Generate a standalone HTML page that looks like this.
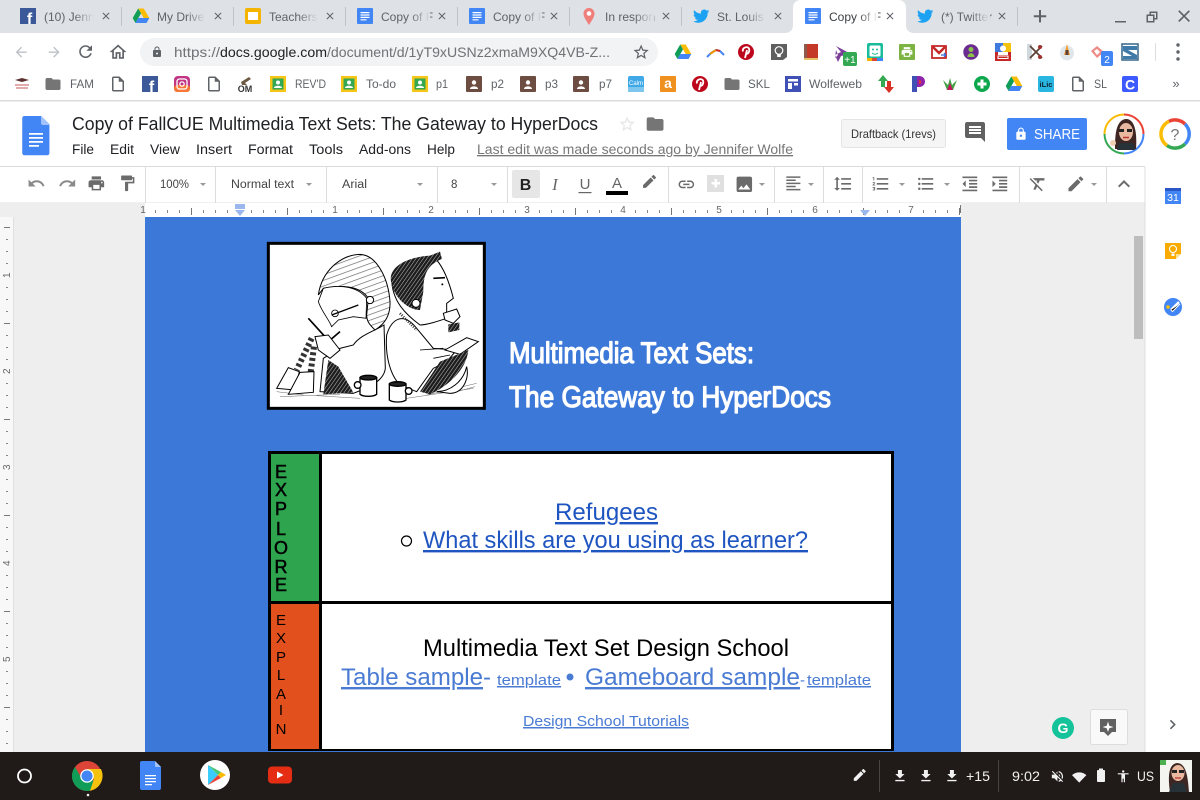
<!DOCTYPE html>
<html><head><meta charset="utf-8"><title>Copy of FallCUE Multimedia Text Sets</title>
<style>
html,body{margin:0;padding:0;width:1200px;height:800px;overflow:hidden;background:#fff}
svg{display:block}
text{font-family:"Liberation Sans",sans-serif}
.tab{font-size:12px;fill:#5f6368}
.bm{font-size:12px;fill:#5f6368}
.menu{font-size:13.5px;fill:#202124}
.tb{font-size:11.5px;fill:#444}
.rl{font-size:10px;fill:#666}
.shelf{font-size:14px;fill:#f1f1f1}
</style></head><body>
<svg width="1200" height="800" viewBox="0 0 1200 800" xmlns="http://www.w3.org/2000/svg">
<defs>
<linearGradient id="fd"><stop offset="0" stop-color="#dee1e6" stop-opacity="0"/><stop offset="1" stop-color="#dee1e6"/></linearGradient>
<linearGradient id="fw"><stop offset="0" stop-color="#fff" stop-opacity="0"/><stop offset="1" stop-color="#fff"/></linearGradient>
<pattern id="rt" x="143" y="0" width="96" height="20" patternUnits="userSpaceOnUse">
<rect x="12" y="7" width="1" height="3" fill="#888"/><rect x="24" y="7" width="1" height="3" fill="#888"/><rect x="36" y="7" width="1" height="3" fill="#888"/><rect x="48" y="5" width="1" height="7" fill="#777"/><rect x="60" y="7" width="1" height="3" fill="#888"/><rect x="72" y="7" width="1" height="3" fill="#888"/><rect x="84" y="7" width="1" height="3" fill="#888"/>
</pattern>
<pattern id="vt" x="0" y="179" width="14" height="96" patternUnits="userSpaceOnUse">
<rect x="6" y="12" width="2" height="1" fill="#888"/><rect x="6" y="24" width="2" height="1" fill="#888"/><rect x="6" y="36" width="2" height="1" fill="#888"/><rect x="4" y="48" width="6" height="1" fill="#777"/><rect x="6" y="60" width="2" height="1" fill="#888"/><rect x="6" y="72" width="2" height="1" fill="#888"/><rect x="6" y="84" width="2" height="1" fill="#888"/>
</pattern>
<pattern id="hatch" width="9" height="9" patternUnits="userSpaceOnUse" patternTransform="rotate(35)"><rect width="9" height="9" fill="#1c1c1c"/><rect width="1.600" height="9" fill="#bbb"/></pattern>
<pattern id="hatch2" width="16" height="16" patternUnits="userSpaceOnUse" patternTransform="rotate(70)"><rect width="16" height="16" fill="#fff"/><rect width="2" height="16" fill="#666"/></pattern>

<path id="close" d="M19 6.41L17.59 5 12 10.59 6.41 5 5 6.41 10.59 12 5 17.59 6.41 19 12 13.41 17.59 19 19 17.59 13.41 12z"/>
<path id="undo" d="M12.5 8c-2.65 0-5.05.99-6.9 2.6L2 7v9h9l-3.62-3.62c1.39-1.16 3.16-1.88 5.12-1.88 3.54 0 6.55 2.31 7.6 5.5l2.37-.78C21.08 11.03 17.15 8 12.5 8z"/>
<path id="redo" d="M18.4 10.6C16.55 8.99 14.15 8 11.5 8c-4.65 0-8.58 3.03-9.96 7.22L3.9 16c1.05-3.19 4.05-5.5 7.6-5.5 1.95 0 3.73.72 5.12 1.88L13 16h9V7l-3.6 3.6z"/>
<path id="print" d="M19 8H5c-1.66 0-3 1.34-3 3v6h4v4h12v-4h4v-6c0-1.66-1.34-3-3-3zm-3 11H8v-5h8v5zm3-7c-.55 0-1-.45-1-1s.45-1 1-1 1 .45 1 1-.45 1-1 1zm-1-9H6v4h12V3z"/>
<path id="paint" d="M18 4V3c0-.55-.45-1-1-1H5c-.55 0-1 .45-1 1v4c0 .55.45 1 1 1h12c.55 0 1-.45 1-1V6h1v4H9v11c0 .55.45 1 1 1h2c.55 0 1-.45 1-1v-9h8V4h-3z"/>
<path id="link" d="M3.9 12c0-1.71 1.39-3.1 3.1-3.1h4V7H7c-2.76 0-5 2.24-5 5s2.24 5 5 5h4v-1.9H7c-1.71 0-3.1-1.39-3.1-3.1zM8 13h8v-2H8v2zm9-6h-4v1.9h4c1.71 0 3.1 1.39 3.1 3.1s-1.39 3.1-3.1 3.1h-4V17h4c2.76 0 5-2.24 5-5s-2.24-5-5-5z"/>
<path id="image" d="M21 19V5c0-1.1-.9-2-2-2H5c-1.1 0-2 .9-2 2v14c0 1.1.9 2 2 2h14c1.1 0 2-.9 2-2zM8.5 13.5l2.5 3.01L14.5 12l4.5 6H5l3.5-4.5z"/>
<path id="align" d="M15 15H3v2h12v-2zm0-8H3v2h12V7zM3 13h18v-2H3v2zm0 8h18v-2H3v2zM3 3v2h18V3H3z"/>
<path id="lsp" d="M6 7h2.5L5 3.5 1.5 7H4v10H1.5L5 20.5 8.5 17H6V7zm4-2v2h12V5H10zm0 14h12v-2H10v2zm0-6h12v-2H10v2z"/>
<path id="numl" d="M2 17h2v.5H3v1h1v.5H2v1h3v-4H2v1zm1-9h1V4H2v1h1v3zm-1 3h1.8L2 13.1v.9h3v-1H3.2L5 10.9V10H2v1zm5-6v2h14V5H7zm0 14h14v-2H7v2zm0-6h14v-2H7v2z"/>
<path id="bull" d="M4 10.5c-.83 0-1.5.67-1.5 1.5s.67 1.5 1.5 1.5 1.5-.67 1.5-1.5-.67-1.5-1.5-1.5zm0-6c-.83 0-1.5.67-1.5 1.5S3.17 7.5 4 7.5 5.5 6.83 5.5 6 4.83 4.5 4 4.5zm0 12c-.83 0-1.5.68-1.5 1.5s.68 1.5 1.5 1.5 1.5-.68 1.5-1.5-.67-1.5-1.5-1.5zM7 19h14v-2H7v2zm0-6h14v-2H7v2zm0-8v2h14V5H7z"/>
<path id="indl" d="M11 17h10v-2H11v2zm-8-5l4 4V8l-4 4zm0 9h18v-2H3v2zM3 3v2h18V3H3zm8 6h10V7H11v2zm0 4h10v-2H11v2z"/>
<path id="indr" d="M3 21h18v-2H3v2zM3 8v8l4-4-4-4zm8 9h10v-2H11v2zM3 3v2h18V3H3zm8 6h10V7H11v2zm0 4h10v-2H11v2z"/>
<path id="clr" d="M3.27 5L2 6.27l6.97 6.97L6.5 19h3l1.57-3.66L16.73 21 18 19.73 3.55 5.27 3.27 5zM6 5v.18L8.82 8h2.4l-.72 1.68 2.1 2.1L14.21 8H20V5H6z"/>
<path id="edit" d="M3 17.25V21h3.75L17.81 9.94l-3.75-3.75L3 17.25zM20.71 7.04c.39-.39.39-1.02 0-1.41l-2.34-2.34c-.39-.39-1.02-.39-1.41 0l-1.83 1.83 3.75 3.75 1.83-1.83z"/>
<path id="mark" d="M17.75 7L14 3.25l-10 10V17h3.75l10-10zm2.96-2.96c.39-.39.39-1.02 0-1.41L18.37.29c-.39-.39-1.02-.39-1.41 0L15 2.25 18.75 6l1.96-1.96z"/>
<path id="cmt" d="M21.99 4c0-1.1-.89-2-1.99-2H4c-1.1 0-2 .9-2 2v12c0 1.1.9 2 2 2h14l4 4-.01-18zM18 14H6v-2h12v2zm0-3H6V9h12v2zm0-3H6V6h12v2z"/>
<path id="lock" d="M18 8h-1V6c0-2.76-2.24-5-5-5S7 3.24 7 6v2H6c-1.1 0-2 .9-2 2v10c0 1.1.9 2 2 2h12c1.1 0 2-.9 2-2V10c0-1.1-.9-2-2-2zm-6 9c-1.1 0-2-.9-2-2s.9-2 2-2 2 .9 2 2-.9 2-2 2zm3.1-9H8.9V6c0-1.71 1.39-3.1 3.1-3.1 1.71 0 3.1 1.39 3.1 3.1v2z"/>
<path id="star" d="M22 9.24l-7.19-.62L12 2 9.19 8.63 2 9.24l5.46 4.73L5.82 21 12 17.27 18.18 21l-1.63-7.03L22 9.24zM12 15.4l-3.76 2.27 1-4.28-3.32-2.88 4.38-.38L12 6.1l1.71 4.04 4.38.38-3.32 2.88 1 4.28L12 15.4z"/>
<path id="folder" d="M10 4H4c-1.1 0-1.99.9-1.99 2L2 18c0 1.1.9 2 2 2h16c1.1 0 2-.9 2-2V8c0-1.1-.9-2-2-2h-8l-2-2z"/>
<path id="file" d="M14 2H6c-1.1 0-1.99.9-1.99 2L4 20c0 1.1.89 2 1.99 2H18c1.1 0 2-.9 2-2V8l-6-6zm4 18H6V4h7v5h5v11z"/>
<path id="home" d="M12 5.69l5 4.5V18h-2v-6H9v6H7v-7.81l5-4.5M12 3L2 12h3v8h6v-6h2v6h6v-8h3L12 3z"/>
<path id="refresh" d="M17.65 6.35C16.2 4.9 14.21 4 12 4c-4.42 0-7.99 3.58-7.99 8s3.57 8 7.99 8c3.73 0 6.84-2.55 7.73-6h-2.08c-.82 2.33-3.04 4-5.65 4-3.31 0-6-2.69-6-6s2.69-6 6-6c1.66 0 3.14.69 4.22 1.78L13 11h7V4l-2.35 2.35z"/>
<path id="back" d="M20 11H7.83l5.59-5.59L12 4l-8 8 8 8 1.41-1.41L7.83 13H20v-2z"/>
<path id="fwd" d="M12 4l-1.41 1.41L16.17 11H4v2h12.17l-5.58 5.59L12 20l8-8z"/>
<path id="dl" d="M19 9h-4V3H9v6H5l7 7 7-7zM5 18v2h14v-2H5z"/>
<path id="wifi" d="M12 4C7.3 4 3.2 5.7 0 8.5L12 21 24 8.5C20.8 5.7 16.7 4 12 4z"/>
<path id="mute" d="M16.5 12c0-1.77-1.02-3.29-2.5-4.03v2.21l2.45 2.45c.03-.2.05-.41.05-.63zm2.5 0c0 .94-.2 1.82-.54 2.64l1.51 1.51C20.63 14.91 21 13.5 21 12c0-4.28-2.99-7.86-7-8.77v2.06c2.89.86 5 3.54 5 6.71zM4.27 3L3 4.27 7.73 9H3v6h4l5 5v-6.73l4.25 4.25c-.67.52-1.42.93-2.25 1.18v2.06c1.38-.31 2.63-.95 3.69-1.81L19.73 21 21 19.73l-9-9L4.27 3zM12 4L9.91 6.09 12 8.18V4z"/>
<path id="acc" d="M12 2c1.1 0 2 .9 2 2s-.9 2-2 2-2-.9-2-2 .9-2 2-2zm9 7h-6v13h-2v-6h-2v6H9V9H3V7h18v2z"/>
<path id="up" d="M12 8l-6 6 1.41 1.41L12 10.83l4.59 4.58L18 14z"/>
<path id="chev" d="M10 6L8.59 7.41 13.17 12l-4.58 4.59L10 18l6-6z"/>
<path id="bird" d="M23.953 4.57a10 10 0 01-2.825.775 4.958 4.958 0 002.163-2.723c-.951.555-2.005.959-3.127 1.184a4.92 4.92 0 00-8.384 4.482C7.69 8.095 4.067 6.13 1.64 3.162a4.822 4.822 0 00-.666 2.475c0 1.71.87 3.213 2.188 4.096a4.904 4.904 0 01-2.228-.616v.06a4.923 4.923 0 003.946 4.827 4.996 4.996 0 01-2.212.085 4.936 4.936 0 004.604 3.417 9.867 9.867 0 01-6.102 2.105c-.39 0-.779-.023-1.17-.067a13.995 13.995 0 007.557 2.209c9.053 0 13.998-7.496 13.998-13.985 0-.21 0-.42-.015-.63A9.935 9.935 0 0024 4.59z"/>
<g id="doc16"><rect x="-8" y="-8" width="16" height="16" rx="1" fill="#4285f4"/><path d="M-4.5-4h9v1.2h-9zM-4.5-1.6h9v1.2h-9zM-4.5.8h9V2h-9zM-4.5 3.2h6v1.2h-6z" fill="#fff"/></g>
<g id="fb"><rect x="-8" y="-8" width="16" height="16" fill="#3b5998"/><text x="1.5" y="8" font-size="16" font-weight="bold" fill="#fff" text-anchor="middle">f</text></g>
<g id="drive"><path d="M-2.8-7.5h5.6L8.3 2H2.7z" fill="#fbbc05"/><path d="M-2.8-7.5L-8.3 2l2.8 5L0-2.6z" fill="#0f9d58"/><path d="M-5.5 7h11l2.8-5H-2.7z" fill="#4285f4"/></g>
<g id="pin"><circle r="8" fill="#bd081c"/><path d="M-1 6L1-2M-3-.5C-4-4 0-5.500 2-4.500 4.500-3 3 2 .5 1.800" stroke="#fff" stroke-width="1.800" fill="none"/></g>
<g id="cl"><rect x="-8" y="-8" width="16" height="16" fill="#f5c518"/><rect x="-5.500" y="-5.500" width="11" height="11" fill="#35a852"/><circle cy="-1.500" r="2" fill="#fff"/><path d="M-4 4c0-3 8-3 8 0z" fill="#fff"/></g>
<g id="cb"><rect x="-8" y="-8" width="16" height="16" rx="1" fill="#6d4c41"/><circle cy="-1.500" r="2.200" fill="#fff"/><path d="M-4 5c0-3.500 8-3.500 8 0z" fill="#fff"/></g>
</defs>

<!-- Tab strip -->
<rect width="1200" height="33" fill="#dee1e6"/>
<rect x="0" y="33" width="1200" height="67" fill="#fff"/>
<path d="M785 33c5 0 8-3 8-8V8c0-5 3-8 8-8h97c5 0 8 3 8 8v17c0 5 3 8 8 8z" fill="#fff"/>
<g fill="#bfc2c7"><rect x="121" y="7" width="1" height="19"/><rect x="233" y="7" width="1" height="19"/><rect x="345" y="7" width="1" height="19"/><rect x="457" y="7" width="1" height="19"/><rect x="569" y="7" width="1" height="19"/><rect x="681" y="7" width="1" height="19"/><rect x="1017" y="7" width="1" height="19"/></g>

<use href="#fb" x="28" y="16"/>
<use href="#drive" x="141" y="16"/>
<g transform="translate(253 16)"><rect x="-8" y="-8" width="16" height="16" rx="2" fill="#f4b400"/><rect x="-5" y="-4" width="10" height="8" fill="#fff"/></g>
<use href="#doc16" x="365" y="16"/>
<use href="#doc16" x="477" y="16"/>
<g transform="translate(589 16)"><path d="M0 9C-3 4-5.500 1-5.500-2.500a5.500 5.500 0 0 1 11 0C5.500 1 3 4 0 9z" fill="#ef7f7a"/><circle cy="-2.500" r="2.300" fill="#fff"/></g>
<use href="#bird" transform="translate(693 8) scale(.68)" fill="#1da1f2"/>
<use href="#doc16" x="813" y="16"/>
<use href="#bird" transform="translate(917 8) scale(.68)" fill="#1da1f2"/>

<text class="tab" x="44" y="21">(10) Jenn</text><rect x="74" y="8" width="20" height="18" fill="url(#fd)"/>
<text class="tab" x="157" y="21">My Drive</text><rect x="186" y="8" width="20" height="18" fill="url(#fd)"/>
<text class="tab" x="269" y="21">Teachers</text><rect x="298" y="8" width="20" height="18" fill="url(#fd)"/>
<text class="tab" x="381" y="21">Copy of F</text><rect x="410" y="8" width="20" height="18" fill="url(#fd)"/>
<text class="tab" x="493" y="21">Copy of F</text><rect x="522" y="8" width="20" height="18" fill="url(#fd)"/>
<text class="tab" x="605" y="21">In respon</text><rect x="634" y="8" width="20" height="18" fill="url(#fd)"/>
<text class="tab" x="717" y="21">St. Louis</text><rect x="746" y="8" width="20" height="18" fill="url(#fd)"/>
<text class="tab" x="829" y="21" style="fill:#3c4043">Copy of F</text><rect x="858" y="8" width="20" height="18" fill="url(#fw)"/>
<text class="tab" x="941" y="21">(*) Twitter</text><rect x="970" y="8" width="20" height="18" fill="url(#fd)"/>

<g fill="#5f6368">
<use href="#close" transform="translate(100 10) scale(.5)"/><use href="#close" transform="translate(212 10) scale(.5)"/><use href="#close" transform="translate(324 10) scale(.5)"/><use href="#close" transform="translate(436 10) scale(.5)"/><use href="#close" transform="translate(548 10) scale(.5)"/><use href="#close" transform="translate(660 10) scale(.5)"/><use href="#close" transform="translate(772 10) scale(.5)"/><use href="#close" transform="translate(884 10) scale(.5)"/><use href="#close" transform="translate(996 10) scale(.5)"/>
<path d="M1039 10h2v5.200h5.200v2H1041v5.200h-2v-5.200h-5.200v-2h5.200z"/>
<rect x="1115" y="21" width="11" height="1.500"/>
<path transform="translate(-3.500 3.500)" d="M1150 11h3v-3h8v8h-3v3h-8zm1.500 1.500v5h5v-5zm3-3V11h3.500v3.500h1.500v-5z"/>
<use href="#close" transform="translate(1174 6) scale(.84)"/>
</g>

<!-- Address row -->
<use href="#back" transform="translate(13 44) scale(.68)" fill="#bdc1c6"/>
<use href="#fwd" transform="translate(46 44) scale(.68)" fill="#bdc1c6"/>
<use href="#refresh" transform="translate(76 42) scale(.8)" fill="#5f6368"/>
<use href="#home" transform="translate(108 42) scale(.84)" fill="#5f6368"/>
<rect x="140" y="38" width="518" height="28" rx="14" fill="#f1f3f4"/>
<use href="#lock" transform="translate(151 46) scale(.5)" fill="#5f6368"/>
<text x="174" y="57" font-size="14" fill="#6f7276" textLength="46" lengthAdjust="spacingAndGlyphs">https://</text>
<text x="220" y="57" font-size="14" fill="#202124" textLength="107" lengthAdjust="spacingAndGlyphs">docs.google.com</text>
<text x="327" y="57" font-size="14" fill="#6f7276" textLength="283" lengthAdjust="spacingAndGlyphs">/document/d/1yT9xUSNz2xmaM9XQ4VB-Z...</text>
<use href="#star" transform="translate(632 43) scale(.76)" fill="#5f6368"/>

<!-- Extensions -->
<g transform="translate(683 52)"><use href="#drive"/></g>
<path d="M707 57l4-4 5-3 4 1 4 4" fill="none" stroke="#4285f4" stroke-width="2"/><path d="M710 54l6-4" stroke="#f09300" stroke-width="2"/><path d="M716 50l4 1" stroke="#d93025" stroke-width="2"/>
<use href="#pin" x="746" y="52"/>
<g transform="translate(779 52)"><path d="M-8-8H8V5L4 8H-8z" fill="#5f5f5f"/><circle cy="-1.500" r="3.800" fill="none" stroke="#fff" stroke-width="1.200"/><path d="M-1.800 2.500h3.600V5h-3.600z" fill="#fff"/></g>
<g transform="translate(811 52)"><rect x="-7" y="-8" width="14" height="15" fill="#c53929"/><rect x="-7" y="-8" width="3" height="15" fill="#8d5b4c"/><rect x="-7" y="6" width="14" height="2" fill="#e8c468"/></g>
<path d="M836 46L851 54 841 56 838 62 835 55 841 52zM836 50l-1 8 3-3z" fill="#7b3f98"/>
<rect x="843" y="52" width="14" height="14" rx="2" fill="#34a853"/><text x="850" y="63" font-size="10" fill="#fff" text-anchor="middle">+1</text>
<g transform="translate(875 52)"><rect x="-8" y="-9" width="16" height="18" rx="2" fill="#1abc9c"/><rect x="-5.500" y="-6.500" width="11" height="11" rx="1.500" fill="#fff"/><circle cx="-2" cy="-2.500" r="1" fill="#1abc9c"/><circle cx="2" cy="-2.500" r="1" fill="#1abc9c"/><path d="M-3 1q3 2.500 6 0" stroke="#1abc9c" fill="none"/><rect x="-8" y="6" width="5" height="3" fill="#f4b400"/><rect x="-3" y="6" width="5" height="3" fill="#db4437"/><rect x="2" y="6" width="6" height="3" fill="#4285f4"/></g>
<g transform="translate(907 52)"><rect x="-8" y="-8" width="16" height="16" rx="1" fill="#7cb342"/><use href="#print" transform="translate(-6.500 -6.500) scale(.54)" fill="#fff"/></g>
<g transform="translate(939 52)"><rect x="-7" y="-6" width="14" height="12" fill="#fff" stroke="#c62828" stroke-width="1.800"/><path d="M-6-5L0 1 6-5" fill="none" stroke="#c62828" stroke-width="2.500"/><path d="M2 3h5M7 3L5 1M7 3L5 5" stroke="#3367d6" stroke-width="1.200" fill="none"/></g>
<g transform="translate(971 52)"><circle r="7.700" fill="#6a2c91"/><circle cy="-2.500" r="2.500" fill="#8bc34a"/><path d="M-3.500 5c0-5 7-5 7 0z" fill="#8bc34a"/></g>
<g transform="translate(1003 52)"><rect x="-8" y="-9" width="8" height="9" fill="#3f7bdc"/><rect y="-9" width="8" height="9" fill="#f4c20d"/><rect x="-8" width="16" height="9" fill="#c62828"/><circle cy="-3.500" r="3" fill="#fff"/><rect x="-5" width="10" height="3" fill="#fff"/><rect x="-5" y="4" width="10" height="2.500" fill="none" stroke="#fff"/></g>
<g transform="translate(1035 52)"><rect x="-8" y="-8" width="5" height="16" fill="#cfd8dc"/><path d="M-5-6L7 6M-5 6L7-6" stroke="#5d4037" stroke-width="1.800"/><circle cx="5" cy="-5" r="2" fill="#a03030"/><circle cx="5" cy="5" r="2" fill="#a03030"/></g>
<g transform="translate(1067 52)"><ellipse cy="1" rx="7" ry="7.500" fill="#dfe6ec"/><path d="M0-8L3 3H-3z" fill="#f0a030"/><rect x="-1.500" y="-2" width="3" height="5" fill="#5d4037"/></g>
<g transform="translate(1098 52)"><path d="M-7-1L-1-6 6 0-1 6z" fill="#ee8a85"/><path d="M-4-1L-1-3 2 0-1 3z" fill="#fff"/></g>
<rect x="1101" y="51" width="12" height="15" rx="2" fill="#4285f4"/><text x="1107" y="63" font-size="10" fill="#fff" text-anchor="middle">2</text>
<g transform="translate(1130 52)"><rect x="-8" y="-8" width="16" height="16" fill="#fff" stroke="#33658a" stroke-width="1.500"/><path d="M-7-6H7V-2L-2-2 7 3V7H-7V4H2L-7-1z" fill="#3f7aa8"/></g>
<rect x="1155" y="43" width="1" height="18" fill="#ddd"/>
<g fill="#5f6368"><circle cx="1178" cy="45" r="1.700"/><circle cx="1178" cy="52" r="1.700"/><circle cx="1178" cy="59" r="1.700"/></g>

<!-- Bookmarks -->
<g transform="translate(22 84)"><rect x="-7" y="-7" width="14" height="14" fill="#fff"/><path d="M-7-4L0-6 7-4 0-2z" fill="#5d3030"/><path d="M-7 1h14M-6 4h12" stroke="#d89090" stroke-width="1.600"/></g>
<use href="#folder" transform="translate(44 75) scale(.75)" fill="#757575"/>
<text class="bm" x="70" y="88" textLength="24" lengthAdjust="spacingAndGlyphs">FAM</text>
<use href="#file" transform="translate(109 75) scale(.75)" fill="#5f6368"/>
<use href="#fb" x="150" y="84"/>
<g transform="translate(182 84)"><rect x="-8" y="-8" width="16" height="16" rx="4" fill="#c13584"/><rect x="-8" y="1" width="16" height="7" rx="3" fill="#f77737"/><rect x="-5" y="-5" width="10" height="10" rx="2.500" fill="none" stroke="#fff" stroke-width="1.300"/><circle r="2.200" fill="none" stroke="#fff" stroke-width="1.200"/></g>
<use href="#file" transform="translate(205 75) scale(.75)" fill="#5f6368"/>
<g transform="translate(245 84)"><path d="M-4-2L4-7 6-5 0-1 2 1-3 1z" fill="#6d5a45"/><text y="8" font-size="9" font-weight="bold" fill="#333" text-anchor="middle">OM</text></g>
<use href="#cl" x="278" y="84"/><text class="bm" x="295" y="88" textLength="31" lengthAdjust="spacingAndGlyphs">REV'D</text>
<use href="#cl" x="349" y="84"/><text class="bm" x="366" y="88" textLength="30" lengthAdjust="spacingAndGlyphs">To-do</text>
<use href="#cl" x="420" y="84"/><text class="bm" x="436" y="88" textLength="12" lengthAdjust="spacingAndGlyphs">p1</text>
<use href="#cb" x="474" y="84"/><text class="bm" x="491" y="88" textLength="13" lengthAdjust="spacingAndGlyphs">p2</text>
<use href="#cb" x="528" y="84"/><text class="bm" x="545" y="88" textLength="13" lengthAdjust="spacingAndGlyphs">p3</text>
<use href="#cb" x="581" y="84"/><text class="bm" x="599" y="88" textLength="13" lengthAdjust="spacingAndGlyphs">p7</text>
<g transform="translate(636 84)"><rect x="-8" y="-8" width="16" height="16" rx="2" fill="#3fa9e8"/><text y="1" font-size="6" fill="#fff" text-anchor="middle">Calm</text><rect x="-8" y="3" width="16" height="5" fill="#7fc6ef"/></g>
<g transform="translate(668 84)"><rect x="-8" y="-8" width="16" height="16" rx="1" fill="#f09020"/><text y="4" font-size="14" font-weight="bold" fill="#fff" text-anchor="middle">a</text></g>
<use href="#pin" x="700" y="84"/>
<use href="#folder" transform="translate(723 75) scale(.75)" fill="#757575"/>
<text class="bm" x="748" y="88" textLength="22" lengthAdjust="spacingAndGlyphs">SKL</text>
<g transform="translate(793 84)"><rect x="-8" y="-8" width="16" height="16" fill="#3f51b5"/><path d="M-5-5H5v2.500H-5zM-5-1h4v6h-4zM1-1h4v2.500H1z" fill="#fff"/></g>
<text class="bm" x="809" y="88" textLength="53" lengthAdjust="spacingAndGlyphs">Wolfeweb</text>
<g transform="translate(886 84)"><path d="M-3-9L2-3H-1V3H-5V-3H-8z" fill="#34a853"/><path d="M3 9L8 3H5V-3H1V3H-2z" fill="#d93025"/></g>
<g transform="translate(918 84)"><path d="M-6-8H1C9-8 9 3 1 3H-1V8H-6z" fill="#8e24aa"/><path d="M-6-8H-1V8H-6z" fill="#3f51b5"/><path d="M1-4C4-4 4 0 1 0z" fill="#e53935"/></g>
<g transform="translate(950 84)"><path d="M-7-4L-2 1 0-6 2 1 7-4 3 6H-3z" fill="#43a047"/><path d="M-3 6L0-1 3 6z" fill="#c2185b"/></g>
<g transform="translate(982 84)"><circle r="8" fill="#0da84d"/><path d="M-1.500-4.500h3v3h3v3h-3v3h-3v-3h-3v-3h3z" fill="#fff"/></g>
<use href="#drive" x="1014" y="84"/>
<g transform="translate(1046 84)"><rect x="-8" y="-8" width="16" height="16" rx="2" fill="#29b6e0"/><text y="3" font-size="7.500" font-weight="bold" fill="#123" text-anchor="middle">iLic</text></g>
<use href="#file" transform="translate(1069 75) scale(.75)" fill="#5f6368"/>
<text class="bm" x="1094" y="88" textLength="13" lengthAdjust="spacingAndGlyphs">SL</text>
<g transform="translate(1130 84)"><rect x="-8" y="-8" width="16" height="16" rx="2" fill="#3d5afe"/><text y="5.500" font-size="14" font-weight="bold" fill="#fff" text-anchor="middle">C</text></g>
<text x="1176" y="88" font-size="13" fill="#5f6368" text-anchor="middle">»</text>

<rect x="0" y="100" width="1200" height="1.500" fill="#dcdcdc"/>

<!-- Docs header -->
<g transform="translate(23 116)"><path d="M2 0H24L35 11V49a3 3 0 0 1-3 3H2a3 3 0 0 1-3-3V3A3 3 0 0 1 2 0z" transform="scale(.755)" fill="#4285f4"/><path d="M18 0l9 9h-7a2 2 0 0 1-2-2z" fill="#a1c2fa"/><path d="M6 17h14v1.700H6zM6 21h14v1.700H6zM6 25h14v1.700H6zM6 29h10v1.700H6z" fill="#fff"/></g>
<text x="72" y="130" font-size="18" fill="#202124" textLength="526" lengthAdjust="spacingAndGlyphs">Copy of FallCUE Multimedia Text Sets: The Gateway to HyperDocs</text>
<text class="menu" x="72" y="154" textLength="22" lengthAdjust="spacingAndGlyphs">File</text>
<text class="menu" x="110" y="154" textLength="24" lengthAdjust="spacingAndGlyphs">Edit</text>
<text class="menu" x="150" y="154" textLength="30" lengthAdjust="spacingAndGlyphs">View</text>
<text class="menu" x="196" y="154" textLength="36" lengthAdjust="spacingAndGlyphs">Insert</text>
<text class="menu" x="248" y="154" textLength="45" lengthAdjust="spacingAndGlyphs">Format</text>
<text class="menu" x="309" y="154" textLength="34" lengthAdjust="spacingAndGlyphs">Tools</text>
<text class="menu" x="359" y="154" textLength="52" lengthAdjust="spacingAndGlyphs">Add-ons</text>
<text class="menu" x="427" y="154" textLength="28" lengthAdjust="spacingAndGlyphs">Help</text>
<text x="477" y="154" font-size="13.500" fill="#777" text-decoration="underline" textLength="316" lengthAdjust="spacingAndGlyphs">Last edit was made seconds ago by Jennifer Wolfe</text>
<use href="#star" transform="translate(618 115) scale(.76)" fill="#e6e6e6"/>
<use href="#folder" transform="translate(645 114) scale(.84)" fill="#757575"/>
<rect x="841.500" y="119.500" width="104" height="28" rx="2" fill="#f5f5f5" stroke="#e4e4e4"/>
<text x="851" y="138" font-size="12" fill="#333" textLength="85" lengthAdjust="spacingAndGlyphs">Draftback (1revs)</text>
<use href="#cmt" transform="translate(963 120) scale(1)" fill="#616161"/>
<rect x="1007" y="118" width="80" height="32" rx="2" fill="#4285f4"/>
<use href="#lock" transform="translate(1014 127) scale(.58)" fill="#fff"/>
<text x="1034" y="139" font-size="15" fill="#fff" textLength="46" lengthAdjust="spacingAndGlyphs">SHARE</text>
<!-- avatar -->
<g transform="translate(1124 134)">
<path d="M0-19.500A19.500 19.500 0 0 1 19.500 0" fill="none" stroke="#ea4335" stroke-width="2"/><path d="M19.500 0A19.500 19.500 0 0 1 0 19.500" fill="none" stroke="#4285f4" stroke-width="2"/><path d="M0 19.500A19.500 19.500 0 0 1-19.500 0" fill="none" stroke="#34a853" stroke-width="2"/><path d="M-19.500 0A19.500 19.500 0 0 1 0-19.500" fill="none" stroke="#fbbc05" stroke-width="2"/>
<circle r="17" fill="#fff"/>
<path d="M-9 15C-9 4-9-14 2-15 12-15 13 2 12 15z" fill="#3e2723"/>
<ellipse cx="2" cy="-2" rx="7" ry="9" fill="#e8b8a0"/>
<path d="M-5-5h5v3h-5zM3-5h5v3H3z" fill="#222"/>
<path d="M-1 3.500h6" stroke="#b33" stroke-width="1.500"/>
<path d="M-7 16L-5 9H9L11 16z" fill="#263238"/>
<circle cx="-11" cy="9" r="3" fill="#f0d0b0"/>
</g>
<g transform="translate(1175 134)" fill="none" stroke-width="3.500">
<path d="M-6-12.700A14 14 0 0 1 10-10" stroke="#ea4335"/>
<path d="M10-10A14 14 0 0 1 10 10" stroke="#4285f4"/>
<path d="M10 10A14 14 0 0 1-8 11.500" stroke="#34a853"/>
<path d="M-8 11.500A14 14 0 0 1-6-12.700" stroke="#fbbc05"/>
<text y="6" font-size="16" fill="#757575" stroke="none" text-anchor="middle">?</text>
</g>

<!-- Toolbar -->
<rect x="0" y="166" width="1145" height="1" fill="#dadada"/>
<rect x="0" y="167" width="1145" height="36" fill="#fff"/>
<rect x="0" y="202.500" width="1145" height="1" fill="#e0e0e0"/>
<g fill="#dcdcdc"><rect x="145" y="167" width="1" height="36"/><rect x="215" y="167" width="1" height="36"/><rect x="326" y="167" width="1" height="36"/><rect x="437" y="167" width="1" height="36"/><rect x="507" y="167" width="1" height="36"/><rect x="668" y="167" width="1" height="36"/><rect x="774" y="167" width="1" height="36"/><rect x="823" y="167" width="1" height="36"/><rect x="862" y="167" width="1" height="36"/><rect x="1019" y="167" width="1" height="36"/><rect x="1106" y="167" width="1" height="36"/></g>
<g fill="#6b6b6b">
<use href="#undo" transform="translate(27 174) scale(.78)" fill="#8a8a8a"/>
<use href="#redo" transform="translate(58 174) scale(.78)" fill="#8a8a8a"/>
<use href="#print" transform="translate(87 174) scale(.78)"/>
<use href="#paint" transform="translate(118 174) scale(.78)"/>
<use href="#mark" transform="translate(640 175) scale(.76)"/>
<use href="#link" transform="translate(677 175) scale(.78)"/>
<use href="#image" transform="translate(734 174) scale(.86)"/>
<use href="#align" transform="translate(784 174) scale(.78)"/>
<use href="#lsp" transform="translate(833 174) scale(.82)"/>
<use href="#numl" transform="translate(871 174) scale(.82)"/>
<use href="#bull" transform="translate(916 174) scale(.82)"/>
<use href="#indl" transform="translate(960 174) scale(.82)"/>
<use href="#indr" transform="translate(990 174) scale(.82)"/>
<use href="#clr" transform="translate(1028 174) scale(.82)"/>
<use href="#edit" transform="translate(1066 174) scale(.82)"/>
<use href="#up" transform="translate(1112 172) scale(1)"/>
</g>
<g transform="translate(716 184)"><rect x="-9" y="-9" width="17" height="17" fill="#e0e0e0"/><path d="M-1.500-5h2.500v3h3v2.500H1v3h-2.500v-3h-3v-2.500h3z" fill="#fff"/></g>
<g fill="#999"><path d="M200 183h6l-3 3zM306 183h6l-3 3zM417 183h6l-3 3zM491 183h6l-3 3zM759 183h6l-3 3zM808 183h6l-3 3zM899 183h6l-3 3zM944 183h6l-3 3zM1091 183h6l-3 3z"/></g>
<text class="tb" x="160" y="188" textLength="29" lengthAdjust="spacingAndGlyphs">100%</text>
<text class="tb" x="231" y="188" textLength="63" lengthAdjust="spacingAndGlyphs">Normal text</text>
<text class="tb" x="342" y="188" textLength="25" lengthAdjust="spacingAndGlyphs">Arial</text>
<text class="tb" x="451" y="188">8</text>
<rect x="512" y="170" width="28" height="28" rx="2" fill="#e6e6e6"/>
<text x="525.500" y="190" font-size="16" font-weight="bold" fill="#222" text-anchor="middle">B</text>
<text x="555" y="190" font-size="17" fill="#666" text-anchor="middle" style="font-family:'Liberation Serif',serif;font-style:italic">I</text>
<text x="585" y="189" font-size="15" fill="#666" text-anchor="middle">U</text><rect x="578.500" y="192" width="13" height="1.200" fill="#666"/>
<text x="617" y="188" font-size="15" fill="#666" text-anchor="middle">A</text><rect x="606" y="191" width="22" height="4" fill="#000"/>

<!-- Canvas -->
<rect x="0" y="203" width="1145" height="549" fill="#eeeeee"/>
<rect x="145" y="203" width="816" height="14" fill="#fff"/>
<g transform="translate(0 203)"><rect x="145" y="0" width="816" height="14" fill="url(#rt)"/></g>
<text class="rl" x="143" y="213" text-anchor="middle">1</text><text class="rl" x="335" y="213" text-anchor="middle">1</text><text class="rl" x="431" y="213" text-anchor="middle">2</text><text class="rl" x="527" y="213" text-anchor="middle">3</text><text class="rl" x="623" y="213" text-anchor="middle">4</text><text class="rl" x="719" y="213" text-anchor="middle">5</text><text class="rl" x="815" y="213" text-anchor="middle">6</text><text class="rl" x="911" y="213" text-anchor="middle">7</text>
<rect x="960" y="205" width="1" height="8" fill="#777"/>
<path d="M235 204h10v5h-10z" fill="#9ab8ee"/><path d="M235 210h10l-5 6z" fill="#9ab8ee"/>
<path d="M860 210h10l-5 6z" fill="#9ab8ee"/>
<rect x="0" y="217" width="13" height="535" fill="#f8f8f8"/><rect x="13" y="217" width="1" height="535" fill="#e0e0e0"/>
<rect x="0" y="217" width="14" height="535" fill="url(#vt)"/>
<g font-size="10" fill="#666"><text transform="translate(10 278) rotate(-90)">1</text><text transform="translate(10 374) rotate(-90)">2</text><text transform="translate(10 470) rotate(-90)">3</text><text transform="translate(10 566) rotate(-90)">4</text><text transform="translate(10 662) rotate(-90)">5</text></g>
<rect x="1134" y="236" width="9" height="103" fill="#bdbdbd"/>

<!-- Page -->
<rect x="145" y="217" width="816" height="535" fill="#3c78d8"/>

<!-- Illustration -->
<g transform="translate(260 235) scale(.33333)">
<rect x="25" y="25" width="648" height="495" fill="#fff" stroke="#000" stroke-width="9"/>
<g stroke="#666" stroke-width="1.500" fill="none"><path d="M50 470L130 480M60 485L240 478M170 482L300 490M440 490L640 460M500 480L650 445M590 470L645 455"/></g>
<path d="M380 300C395 250 430 230 470 280L520 340 590 345 560 380 520 400 470 470 420 450C390 420 375 360 380 300Z" fill="#fff" stroke="#000" stroke-width="3"/>
<path d="M395 130C400 80 470 60 530 75 560 110 575 170 580 190L560 205 560 250C530 260 500 270 480 270 440 240 395 200 395 130Z" fill="#fff" stroke="#000" stroke-width="3"/>
<path d="M392 130C395 85 460 65 510 62L540 50 546 72C500 90 490 120 490 170L480 225C440 225 395 180 392 130Z" fill="url(#hatch)"/>
<circle cx="468" cy="205" r="12" fill="#fff" stroke="#000" stroke-width="3"/>
<path d="M520 130L555 128" stroke="#000" stroke-width="5"/><circle cx="547" cy="148" r="3" fill="#000"/>
<path d="M550 235L590 222 600 245 580 265 555 255Z" fill="#fff" stroke="#000" stroke-width="3"/>
<path d="M565 268L598 262 598 285 565 292Z" fill="url(#hatch)"/>
<path d="M420 235L470 285" stroke="#333" stroke-width="8" stroke-dasharray="3 4"/>
<path d="M555 345L620 308 655 320 600 358Z" fill="#fff" stroke="#000" stroke-width="3"/>
<path d="M480 470L540 380 625 345C620 400 570 450 510 478Z" fill="url(#hatch)"/>
<path d="M530 470C570 470 610 440 620 395 628 430 610 475 570 475Z" fill="#fff" stroke="#000" stroke-width="3"/>
<path d="M480 345L550 340M520 370L570 360" stroke="#000" stroke-width="2.500" fill="none"/>
<path d="M372 270C340 290 300 300 280 330L240 340 190 370 180 470 280 475C320 460 372 440 376 400Z" fill="#fff" stroke="#000" stroke-width="3"/>
<path d="M205 375L235 395 280 472 190 478Z" fill="url(#hatch)"/>
<path d="M175 180C185 110 240 60 300 58 350 60 385 130 390 200 392 245 370 270 345 285 330 270 320 260 320 240L325 190C300 150 240 150 190 160Z" fill="url(#hatch2)" stroke="#000" stroke-width="3"/>
<path d="M190 160C230 150 290 150 320 190L318 250 280 245 235 255 215 275C205 250 185 230 175 200Z" fill="#fff" stroke="#000" stroke-width="2.500"/>
<circle cx="330" cy="195" r="11" fill="#fff" stroke="#000" stroke-width="3"/>
<path d="M215 240L295 210" stroke="#000" stroke-width="4"/><circle cx="225" cy="235" r="10" fill="none" stroke="#000" stroke-width="2.500"/>
<path d="M145 250L195 305M240 290L205 320" stroke="#000" stroke-width="5" fill="none"/>
<path d="M165 305L205 300 240 345 210 370 175 345Z" fill="#fff" stroke="#000" stroke-width="3"/>
<path d="M155 310L110 405" stroke="#333" stroke-width="18" stroke-dasharray="9 8"/><path d="M162 335L152 412" stroke="#333" stroke-width="18" stroke-dasharray="9 8"/>
<path d="M50 460L85 398 118 410 105 465Z" fill="#fff" stroke="#000" stroke-width="3"/>
<path d="M85 478L120 412 162 410 160 472Z" fill="#fff" stroke="#000" stroke-width="3"/>
<g fill="#fff" stroke="#000" stroke-width="4"><path d="M300 428H350V478C340 486 310 486 300 478Z"/><circle cx="293" cy="450" r="10"/><ellipse cx="325" cy="428" rx="25" ry="7" fill="#222"/><path d="M388 447H438V495C428 503 398 503 388 495Z"/><circle cx="446" cy="468" r="10"/><ellipse cx="413" cy="447" rx="25" ry="7" fill="#222"/></g>
</g>

<!-- Headings -->
<text x="509" y="363" font-size="30" fill="#fff" stroke="#fff" stroke-width="1.300" stroke-linejoin="round" textLength="245" lengthAdjust="spacingAndGlyphs">Multimedia Text Sets:</text>
<text x="509" y="407" font-size="30" fill="#fff" stroke="#fff" stroke-width="1.300" stroke-linejoin="round" textLength="322" lengthAdjust="spacingAndGlyphs">The Gateway to HyperDocs</text>

<!-- Table -->
<rect x="268" y="451" width="626" height="300" fill="#000"/>
<rect x="271" y="454" width="48" height="147" fill="#2ea44f"/>
<rect x="271" y="604" width="48" height="145" fill="#e2501d"/>
<rect x="322" y="454" width="569" height="147" fill="#fff"/>
<rect x="322" y="604" width="569" height="145" fill="#fff"/>
<g font-size="18" fill="#000" stroke="#000" stroke-width=".5" text-anchor="middle">
<text x="281" y="478">E</text><text x="281" y="496">X</text><text x="281" y="515">P</text><text x="281" y="535">L</text><text x="281" y="554">O</text><text x="281" y="573">R</text><text x="281" y="591">E</text></g>
<g font-size="15" fill="#000" text-anchor="middle">
<text x="281" y="625">E</text><text x="281" y="643">X</text><text x="281" y="662">P</text><text x="281" y="680">L</text><text x="281" y="699">A</text><text x="281" y="715">I</text><text x="281" y="734">N</text></g>

<text x="555" y="520" font-size="24" fill="#1f55c0" text-decoration="underline" textLength="103" lengthAdjust="spacingAndGlyphs">Refugees</text>
<circle cx="406.500" cy="541" r="5" fill="none" stroke="#000" stroke-width="1.200"/>
<text x="423" y="548" font-size="24" fill="#1f55c0" text-decoration="underline" textLength="385" lengthAdjust="spacingAndGlyphs">What skills are you using as learner?</text>
<text x="423" y="656" font-size="24" fill="#000" textLength="366" lengthAdjust="spacingAndGlyphs">Multimedia Text Set Design School</text>
<text x="341" y="685" font-size="24" fill="#4a7bd3" text-decoration="underline" textLength="142" lengthAdjust="spacingAndGlyphs">Table sample</text>
<text x="483" y="685" font-size="24" fill="#4a7bd3">-</text>
<text x="497" y="685" font-size="15" fill="#4a7bd3" text-decoration="underline" textLength="64" lengthAdjust="spacingAndGlyphs">template</text>
<circle cx="570" cy="677" r="3.500" fill="#4a7bd3"/>
<text x="585" y="685" font-size="24" fill="#4a7bd3" text-decoration="underline" textLength="215" lengthAdjust="spacingAndGlyphs">Gameboard sample</text>
<text x="800" y="685" font-size="15" fill="#4a7bd3">-</text>
<text x="807" y="685" font-size="15" fill="#4a7bd3" text-decoration="underline" textLength="64" lengthAdjust="spacingAndGlyphs">template</text>
<text x="523" y="726" font-size="15" fill="#4a7bd3" text-decoration="underline" textLength="166" lengthAdjust="spacingAndGlyphs">Design School Tutorials</text>

<!-- Grammarly + explore -->
<circle cx="1063" cy="728" r="11" fill="#15c39a"/><text x="1063" y="733" font-size="14" font-weight="bold" fill="#fff" text-anchor="middle">G</text>
<rect x="1090.500" y="709.500" width="37" height="35" rx="2" fill="#f9f9f9" stroke="#ddd"/>
<g transform="translate(1108 727)"><path d="M-8-8H8V5H4L0 9-4 5H-8z" fill="#616161"/><path d="M0-5.500L1.300-1.300 5.500 0 1.300 1.300 0 5 -1.300 1.300-5.500 0-1.300-1.300z" fill="#fff"/></g>

<!-- Side panel -->
<rect x="1145" y="167" width="55" height="585" fill="#fff"/>
<rect x="1144.500" y="167" width="1" height="585" fill="#dfdfdf"/>
<g transform="translate(1173 196)"><rect x="-8" y="-8" width="16" height="16" fill="#4285f4"/><rect x="-8" y="-8" width="16" height="3" fill="#2a56c6"/><text y="5" font-size="10.500" fill="#fff" text-anchor="middle">31</text></g>
<g transform="translate(1173 251)"><path d="M-8-8H8V3L3 8H-8z" fill="#f9ab00"/><path d="M3 8V3H8z" fill="#fde293"/><circle cy="-2" r="3.500" fill="none" stroke="#fff" stroke-width="1.100"/><path d="M-1.500 2.500h3V5h-3z" fill="#fff"/></g>
<g transform="translate(1173 307)"><circle r="9" fill="#4285f4"/><path d="M-2 3L6-5" stroke="#fff" stroke-width="2.500"/><path d="M-2 3L-.5 4.500 7-3" stroke="#fff" stroke-width="1"/><circle cx="-5" cy="0" r="1.800" fill="#f4c20d"/></g>
<use href="#chev" transform="translate(1163 715) scale(.8)" fill="#5f6368"/>

<!-- Shelf -->
<rect x="0" y="752" width="1200" height="48" fill="#201a18"/>
<circle cx="24.500" cy="776" r="6.500" fill="none" stroke="#fff" stroke-width="1.800"/>
<g transform="translate(87 776)"><circle r="15" fill="#db4437"/><path d="M0 0L-13 7.500A15 15 0 0 0 3 14.700L7 5z" fill="#0f9d58"/><path d="M0-7H13.900A15 15 0 0 1 3 14.700L7 3z" fill="#f4c20d"/><path d="M-13 7.500A15 15 0 0 1-12-9L-5 3z" fill="#0f9d58"/><circle r="6.800" fill="#fff"/><circle r="5.500" fill="#4285f4"/><circle cx="1" cy="19" r="1.300" fill="#eee"/></g>
<g transform="translate(140 761)"><path d="M2 0H15L21 6V27a2 2 0 0 1-2 2H2a2 2 0 0 1-2-2V2A2 2 0 0 1 2 0z" fill="#4285f4"/><path d="M15 0L21 6H16a1 1 0 0 1-1-1z" fill="#a1c2fa"/><path d="M5 14h11v1.300H5zM5 17h11v1.300H5zM5 20h11v1.300H5zM5 23h7v1.300H5z" fill="#fff"/></g>
<g transform="translate(215 775)"><circle r="15" fill="#fff"/><path d="M-7-10L-7 10 3 0z" fill="#3bccff"/><path d="M-7-10L3 0 6-3z" fill="#48c774"/><path d="M-7 10L3 0 6 3z" fill="#ea4335"/><path d="M3 0L6-3 11 0 6 3z" fill="#fbbc05"/></g>
<g transform="translate(280 775)"><rect x="-12" y="-8.500" width="24" height="17" rx="4" fill="#e52d14"/><path d="M-3-3.500L3.500 0-3 3.500z" fill="#fff"/></g>

<use href="#mark" transform="translate(851 769) scale(.7)" fill="#f1f1f1"/>
<rect x="879" y="760" width="1" height="32" fill="#4a4543"/>
<rect x="998" y="760" width="1" height="32" fill="#4a4543"/>
<g fill="#f1f1f1"><use href="#dl" transform="translate(892 768) scale(.66)"/><use href="#dl" transform="translate(918 768) scale(.66)"/><use href="#dl" transform="translate(944 768) scale(.66)"/></g>
<text class="shelf" x="966" y="781" textLength="24" lengthAdjust="spacingAndGlyphs">+15</text>
<text class="shelf" x="1012" y="781" textLength="28" lengthAdjust="spacingAndGlyphs">9:02</text>
<use href="#mute" transform="translate(1050 769) scale(.62)" fill="#f1f1f1"/>
<use href="#wifi" transform="translate(1072 770) scale(.6)" fill="#f1f1f1"/>
<rect x="1097" y="770" width="8" height="12" rx="1" fill="#f1f1f1"/><rect x="1099" y="768.500" width="4" height="2" fill="#f1f1f1"/>
<use href="#acc" transform="translate(1116 769) scale(.6)" fill="#f1f1f1"/>
<text class="shelf" x="1137" y="781" textLength="17" lengthAdjust="spacingAndGlyphs">US</text>
<g transform="translate(1160 760)"><rect width="32" height="32" fill="#f4f4f0"/><rect width="6" height="5" fill="#4caf50"/><path d="M10 32C8 18 8 4 17 3 27 3 28 20 29 32z" fill="#3e2723"/><ellipse cx="18" cy="13" rx="6.500" ry="8" fill="#e8b8a0"/><path d="M12 10h5v3h-5zM19 10h5v3h-5z" fill="#222"/><path d="M15 18h6" stroke="#b33" stroke-width="1.300"/><path d="M9 32L13 23H24L27 32z" fill="#263238"/></g>
</svg>
</body></html>
